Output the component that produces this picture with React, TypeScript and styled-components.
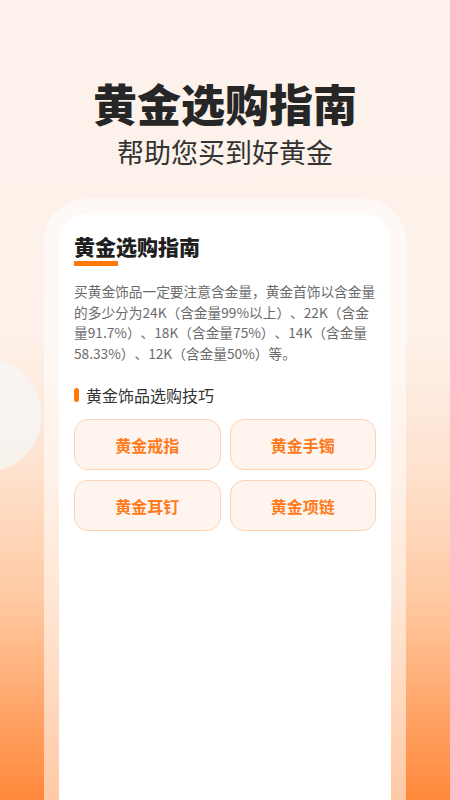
import styled, { createGlobalStyle } from "styled-components";

const GlobalStyle = createGlobalStyle`
  html, body {
    margin: 0;
    padding: 0;
  }
  body {
    font-family: "Noto Sans CJK SC", "Noto Sans", sans-serif;
  }
`;

const TIPS = ["黄金戒指", "黄金手镯", "黄金耳钉", "黄金项链"];

const Page = styled("div")`
  position: relative;
  width: 450px;
  height: 800px;
  overflow: hidden;
  display: flex;
  flex-direction: column;
  align-items: center;
  background: linear-gradient(
    180deg,
    #fdf3ec 0%,
    #fdf1e9 42%,
    #fee3d0 58%,
    #ffc9a2 75%,
    #ff883a 100%
  );
`;

const Bubble = styled("div")`
  position: absolute;
  left: -72px;
  top: 358px;
  width: 114px;
  height: 114px;
  border-radius: 50%;
  background: rgba(247, 245, 242, 0.85);
`;

const Title = styled("h1")`
  margin: 77px 0 0;
  font-size: 44px;
  line-height: 53px;
  font-weight: 900;
  color: #262626;
`;

const Subtitle = styled("p")`
  margin: 6px 0 0;
  font-size: 27px;
  line-height: 32px;
  font-weight: 400;
  color: #333;
`;

const Frame = styled("div")`
  position: relative;
  flex: 1;
  width: 362px;
  box-sizing: border-box;
  margin-top: 31px;
  padding: 14px 15px 0;
  display: flex;
  border-radius: 42px 42px 0 0;
  background: rgba(255, 255, 255, 0.55);
`;

const Card = styled("div")`
  flex: 1;
  padding: 19px 15px 0;
  border-radius: 30px 30px 0 0;
  background: #fff;
`;

const CardTitle = styled("h2")`
  margin: 0;
  font-size: 21px;
  line-height: 28px;
  font-weight: 900;
  color: #1f1f1f;
`;

const Underline = styled("div")`
  width: 44px;
  height: 5px;
  margin-top: 1px;
  background: #ff7a0a;
`;

const Intro = styled("p")`
  margin: 15px 0 0;
  font-size: 13.7px;
  line-height: 20.6px;
  color: #6b6b6b;
  text-spacing-trim: space-all;
`;

const SectionTitle = styled("div")`
  display: flex;
  align-items: center;
  gap: 7px;
  margin-top: 21px;
  font-size: 16px;
  line-height: 22px;
  color: #333;
`;

const Marker = styled("span")`
  width: 5px;
  height: 14px;
  border-radius: 3px;
  background: #ff7a0a;
`;

const TipGrid = styled("div")`
  display: grid;
  grid-template-columns: 1fr 1fr;
  gap: 10px 9px;
  margin-top: 13px;
`;

const TipButton = styled("button")`
  height: 51px;
  border: 1px solid #fdd3b4;
  border-radius: 14px;
  background: #fff5ee;
  color: #ff7a1c;
  font-family: inherit;
  font-size: 16px;
  font-weight: 700;
  cursor: pointer;
`;

function App() {
  return (
    <>
      <GlobalStyle />
      <Page>
        <Bubble />
        <Title>黄金选购指南</Title>
        <Subtitle>帮助您买到好黄金</Subtitle>
        <Frame>
          <Card>
            <CardTitle>黄金选购指南</CardTitle>
            <Underline />
            <Intro>
              买黄金饰品一定要注意含金量，黄金首饰以含金量的多少分为24K（含金量99%以上）、22K（含金量91.7%）、18K（含金量75%）、14K（含金量58.33%）、12K（含金量50%）等。
            </Intro>
            <SectionTitle>
              <Marker />
              黄金饰品选购技巧
            </SectionTitle>
            <TipGrid>
              {TIPS.map((tip) => (
                <TipButton key={tip} type="button">
                  {tip}
                </TipButton>
              ))}
            </TipGrid>
          </Card>
        </Frame>
      </Page>
    </>
  );
}

export default App;
